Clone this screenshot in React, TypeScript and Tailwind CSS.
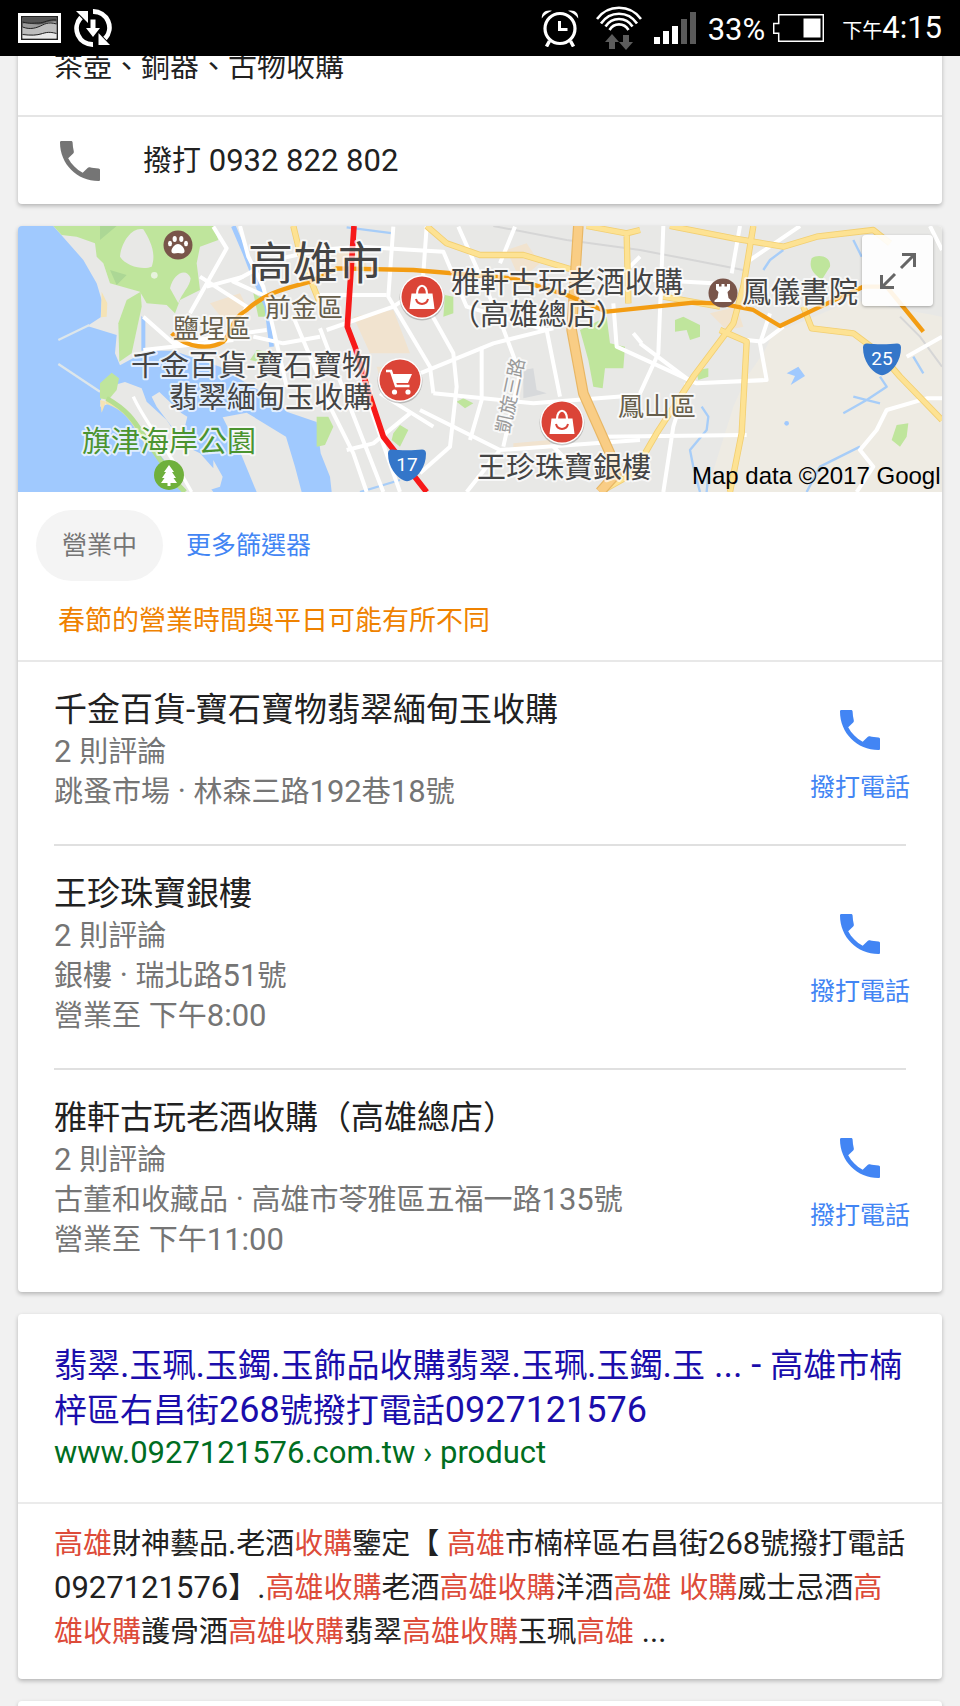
import React from "react";

const LATIN = /([\x20-\x7e·›]+)/;

/* Latin runs are set a little larger than the Chinese glyphs around them. */
function Mixed({ text, latin = "text-[31px]" }: { text: string; latin?: string }) {
  return (
    <>
      {text.split(LATIN).map((run, i) =>
        i % 2 === 1 ? (
          <span key={i} className={latin}>
            {run}
          </span>
        ) : (
          run
        ),
      )}
    </>
  );
}

function PhoneIcon({ className }: { className: string }) {
  return (
    <svg viewBox="0 0 40 40" className={`size-10 shrink-0 ${className}`} fill="currentColor" aria-hidden="true">
      <path d="M1.5 0H11c1 0 1.5.5 1.6 1.5.1 3.200.5 6 1.200 8.700.2.900 0 1.600-.6 2.200L8.200 17.300C11.500 23.500 16.500 28.500 22.700 31.800l4.900-4.900c.6-.6 1.300-.8 2.200-.6 2.700.7 5.500 1 8.700 1.100 1 .1 1.500.6 1.500 1.600v9.500c0 1-.5 1.500-1.500 1.500C17 40 0 23 0 1.500 0 .5.5 0 1.500 0z" />
    </svg>
  );
}

function StatusBar() {
  return (
    <header className="flex h-14 shrink-0 items-center bg-black px-[18px] text-white">
      <svg viewBox="0 0 43 30" className="h-[30px] w-[43px]" aria-hidden="true">
        <path d="M0 0h43v30H0z" fill="#fff" />
        <path d="M3 3h37v24H3z" fill="#222" />
        <path d="M4.500 4.500h34v21h-34z" fill="#9a9a9a" />
        <path d="M4.500 4.500h34v4c-8-1-12 3-18 3s-10-2-16-1z" fill="#555" />
        <path d="M4.500 14c8 3 14 1 20-2s10-2 14-1v9c-8-3-14 2-20 2s-9-2-14-1z" fill="#bdbdbd" />
        <path d="M4.500 21c8 1 14 2 20 0s10-2 14-1v5.500h-34z" fill="#e8e8e8" />
        <path d="M4.500 9c8 2 10 1 16 1s10-4 18-3M4.500 14c8 3 14 1 20-2s10-2 14-1M4.500 21.500c8 1 14 1 20-1s10-1 14 0" fill="none" stroke="#222" />
      </svg>
      <svg viewBox="0 0 38 38" className="ml-[13px] size-[38px]" aria-hidden="true">
        <g fill="none" stroke="#fff" strokeWidth="4.800">
          <path d="M19 35.500A16 16 0 0 1 7 8.500" />
          <path d="M19 2.500A16 16 0 0 1 31 29.500" />
        </g>
        <g fill="#fff">
          <path d="M2 2h12v12z" />
          <path d="M36 36H24.500V24z" />
          <path d="M16.500 10.500h5V19H26l-7 9-7-9h4.500z" />
        </g>
      </svg>

      <div className="ml-auto flex items-center">
        <svg viewBox="0 0 38 38" className="size-[38px]" fill="none" stroke="#fff" aria-hidden="true">
          <circle cx="19" cy="19.500" r="15" strokeWidth="3.200" />
          <path d="M18.500 12v8.500h8" strokeWidth="3" />
          <path d="m8.500 32-3 5.500M29.500 32l3 5.500" strokeWidth="3.500" />
          <path d="M.8 9.500C.5 4 4 .5 11 1.800 7 3.500 3 6 .8 9.500zM37.200 9.500C37.500 4 34 .5 27 1.800c4 1.700 8 4.200 10.200 7.700z" fill="#fff" stroke="none" />
        </svg>
        <svg viewBox="0 0 46 44" className="ml-[17px] h-11 w-[46px]" fill="none" aria-hidden="true">
          <g stroke="#fff" strokeWidth="2.600">
            <path d="M1 13C12-2 34-2 45 13" />
            <path d="M5 17.500C14 4.500 32 4.500 41 17.500" />
            <path d="M9.500 20.500C16 10.500 30 10.500 36.500 20.500" />
            <path d="M13.500 24C18 16.500 28 16.500 32.500 24" />
          </g>
          <path d="M16 28l7 8h-4v7h-6v-7H9zM30 44l-7-8h4v-7h6v7h4z" fill="#5c5c5c" />
        </svg>
        <svg viewBox="0 0 42 32" className="ml-3 h-8 w-[42px]" aria-hidden="true">
          <path d="M0 25h6v7H0zM9 19h6v13H9zM18 14h6v18h-6z" fill="#fff" />
          <path d="M27 7h6v25h-6zM36 0h6v32h-6z" fill="#5a5a5a" />
        </svg>
        <span className="ml-3 pt-[3px] text-[31px] leading-10">33%</span>
        <svg viewBox="0 0 51 28" className="ml-2 h-7 w-[51px]" aria-hidden="true">
          <path d="M5.700.7h44.600v26.600H5.700v-8H.7V9.500h5z" fill="none" stroke="#fff" strokeWidth="1.500" />
          <path d="M30.500 4.500h17v19h-17z" fill="#fff" />
        </svg>
        <time className="ml-[18px] flex items-baseline pt-[3px]">
          <span className="text-[20px] leading-10">下午</span>
          <span className="text-[31px] leading-10">4:15</span>
        </time>
      </div>
    </header>
  );
}

const MAJOR = "#fde293";

function Halo({ x, y, children, anchor }: { x: number; y: number; children: string; anchor?: "end" | "middle" }) {
  return (
    <text x={x} y={y} textAnchor={anchor} stroke="#ffffff" strokeOpacity=".7" strokeWidth="4" strokeLinejoin="round" paintOrder="stroke">
      {children}
    </text>
  );
}

function BagPin({ x, y }: { x: number; y: number }) {
  return (
    <g transform={`translate(${x} ${y})`}>
      <circle cy="1" r="22.500" fill="#000" opacity=".2" />
      <circle r="22" fill="#fff" />
      <circle r="20.500" fill="#db4437" />
      <path d="M-10.500-3.500h21L12.500 12h-25z" fill="#fff" />
      <path d="M-5-3c0-11 10-11 10 0" fill="none" stroke="#fff" strokeWidth="2.200" />
      <path d="M-6 2c1.500 6.500 10.500 6.500 12 0" fill="none" stroke="#db4437" strokeWidth="2" />
    </g>
  );
}

function RouteShield({ x, y, label }: { x: number; y: number; label: string }) {
  return (
    <g transform={`translate(${x} ${y})`}>
      <path d="M-15-15.500C-8-14.500 8-14.500 15-15.500c2.500 0 4 1.500 4 4C19 2 11 12 3 15.500c-2 1-4 1-6 0C-11 12-19 2-19-11.500c0-2.500 1.500-4 4-4z" fill="#3476c9" />
      <text y="6" textAnchor="middle" fill="#fff" className="text-[19px]">
        {label}
      </text>
    </g>
  );
}

function MapArt() {
  return (
    <svg viewBox="18 226 924 266" preserveAspectRatio="xMidYMid slice" className="block w-full" role="img" aria-label="高雄市地圖">
      <rect x="18" y="226" width="924" height="266" fill="#e8e8e6" />
      <g transform="translate(0 220) scale(.33333)" fill="none" strokeLinejoin="round">
        {/* land tones */}
        <path d="M2320 340 2420 300 2560 240 2826 290V816H2120L2200 560 2240 470 2290 400z" fill="#eeebe3" />
        <path d="M1060 290 1180 270 1230 400 1110 400zM1010 100 1090 90 1100 140 1010 150zM1130 440h60l20 60-60 10zM1520 90l60-20 40 60-60 50zM1540 670l110-10v26h-110zM630 250l90-30 30 60-80 20zM2130 280l80-20 20 60-50 10z" fill="#f1e3cf" />
        {/* water */}
        <path d="M54 18H160L215 80 250 120 290 190 305 240 302 292 262 318 350 345 345 400 360 436 440 392 520 392 660 440 740 490 830 540 860 575 950 606 962 700 990 770 995 816H54z" fill="#a0c9fe" />
        <path d="M424 288 436 300V392H424z" fill="#a0c9fe" />
        {/* harbour land */}
        <path d="M668 592 740 578 858 650 885 740 905 816H770L722 700z" fill="#e8e8e6" />
        <path d="M325 500 375 486 425 505 440 545 500 600 560 690 585 740 640 816H545L500 730 400 600 345 545 300 560 306 520z" fill="#e8e8e6" />
        <path d="M455 530 478 516 545 580 562 590 550 640 580 690 600 700 640 745 640 720 668 770 660 800 610 816 600 780 530 640 470 560z" fill="#e8e8e6" />
        <path d="M175 360 268 315M175 432 300 515" stroke="#dde6ea" strokeWidth="7" />
        <path d="M305 215 322 250 320 290 303 292zM300 540 318 545 305 578z" fill="#f5e3b5" />
        <path d="M318 545C390 570 400 610 440 670" stroke="#f1e5a8" strokeWidth="12" />
        {/* parks */}
        <path d="M160 18H640L655 60 600 80 590 130 600 210 540 240 525 280 500 255 440 250 420 215 330 190 310 130 290 110 285 70 230 50 185 45z" fill="#bfe59c" />
        <path d="M360 110C365 60 400 20 430 28 450 60 470 100 455 140 430 150 380 140 360 110zM510 205C520 160 560 140 572 175 570 200 545 220 535 250z" fill="#e8e8e6" />
        <circle cx="463" cy="166" r="10" fill="#e8f3dd" />
        <path d="M330 150 380 165 350 195zM300 18 350 18 300 60z" fill="#acd795" />
        <path d="M422 215 425 260 395 400 358 425 355 310 380 240z" fill="#bfe59c" />
        <path d="M300 490 335 458 357 475 350 510 325 540 300 535z" fill="#bfe59c" />
        <path d="M320 535C400 580 410 620 460 690L530 790 555 816" stroke="#b5df90" strokeWidth="15" />
        <path d="M400 530C430 600 500 680 575 816" stroke="#fff" strokeWidth="10" />
        <path d="M770 390 800 395 795 430 750 420zM950 590 985 590 1000 620 975 675 950 680zM1180 640 1200 615 1225 630 1200 680 1175 660zM1370 545 1390 535 1420 550 1395 565zM1335 225 1360 230 1360 280 1330 290zM760 220 795 240 800 290 775 290z" fill="#bfe59c" />
        <path d="M1740 330 1820 290 1830 370 1875 380 1870 445 1815 445 1808 505 1780 500 1765 420z" fill="#bfe59c" />
        <path d="M2435 115C2455 100 2495 110 2490 140L2465 180C2440 160 2425 145 2435 115zM2025 300 2050 290 2100 315 2100 350 2070 360 2060 330 2025 335zM2088 450 2125 445 2125 470 2095 480zM2675 660 2690 615 2725 610 2720 650 2700 680z" fill="#bfe59c" />
        <path d="M1570 450 1600 445 1610 510 1640 520 1570 535z" fill="#d7d9db" />
        {/* railway and streams */}
        <path d="M1480 18 1700 60 1920 90 2050 115 2230 150M2700 290 2760 350 2826 440" stroke="#d6d6d6" strokeWidth="6" />
        <path d="M700 18 735 100 770 190 800 260 815 380" stroke="#a0c9fe" strokeWidth="14" />
        <path d="M1040 22 1180 40M2100 816 2080 740 2070 690 2120 630 2125 590 2105 560M2120 816 2125 760M2290 150 2310 120 2350 90M2530 580 2600 540 2660 500 2640 470M2560 530 2640 550M2420 816 2460 740 2580 680M2740 410 2770 460M2560 60 2585 110M1080 816 1200 780" stroke="#a7cdf8" strokeWidth="7" />
        <path d="M2360 460 2395 440 2415 468 2372 495 2385 468z" fill="#a0c9fe" />
        <circle cx="2360" cy="610" r="7" fill="#a0c9fe" />
        {/* minor roads */}
        <g stroke="#fff" strokeWidth="12">
          <path d="M640 20 680 85 570 280M720 18 745 110 790 200 830 370 860 500" />
          <path d="M600 170 740 260 690 360M730 170 620 200M430 290 520 370 800 330M430 390 700 360" />
          <path d="M760 350 850 370 960 350M880 290 960 480M800 230 700 185 820 120 960 90" />
          <path d="M955 90 1080 80 1330 95 1400 260 1640 330 1680 530" />
          <path d="M1180 20 1165 230 1290 440 1300 520M1280 20 1265 230 1360 400 1370 500 1350 680 1260 760" />
          <path d="M1375 20 1500 300 1560 460 1510 680" />
          <path d="M1545 20 1500 130M960 225 1160 225M980 330 1180 260 1300 180M960 325 1050 560 1150 816" />
          <path d="M1260 460 1480 370 1660 325M1300 520 1450 535 1600 550 1920 525M1260 570 1500 690 1920 660M1230 580 1120 670 1040 690" />
          <path d="M1445 380 1445 540 1410 660M975 530 1060 700 1100 816M1110 560 1200 816M1140 520 1300 620M1660 680 1700 720M1500 690 1400 816" />
          <path d="M1840 250 1850 380 2090 490 2300 480 2280 370 2310 280M1920 110 1850 180M1990 18 1975 400 1920 520" />
          <path d="M2060 490 2020 620 1990 816M1800 650 2240 645M1920 370 2080 490M1900 340 1925 370M2220 18 2195 160M2250 120 2400 18" />
          <path d="M2240 360 2290 365 2350 320M2826 350 2720 410M2826 535 2780 535 2660 570 2630 630 2580 690 2620 740 2570 816M1960 180 2140 190M2790 18 2826 90" />
        </g>
        {/* arterial roads */}
        <g stroke="#f2cf72" strokeWidth="19">
          <path d="M880 18 900 100 960 250M1280 18 1340 70 1440 105 1570 105 1720 150M1760 18 1880 40 1920 30M1880 40 1885 250M2010 18 2200 55 2350 80 2450 50 2620 30 2670 70" />
          <path d="M2260 18 2230 200 2200 310 2080 470 1970 640 1900 760 1800 816M2160 330 2240 365 2225 640 2190 816M2410 260 2435 325 2560 340 2640 400 2700 470 2826 600M1990 230 2160 260" />
        </g>
        <g stroke={MAJOR} strokeWidth="14">
          <path d="M880 18 900 100 960 250M1280 18 1340 70 1440 105 1570 105 1720 150M1760 18 1880 40 1920 30M1880 40 1885 250M2010 18 2200 55 2350 80 2450 50 2620 30 2670 70" />
          <path d="M2260 18 2230 200 2200 310 2080 470 1970 640 1900 760 1800 816M2160 330 2240 365 2225 640 2190 816M2410 260 2435 325 2560 340 2640 400 2700 470 2826 600M1990 230 2160 260" />
        </g>
        {/* expressway */}
        <path d="M1735 18 1715 330 1750 520 1830 700 1850 760 1800 816" stroke="#e8b765" strokeWidth="32" />
        <path d="M1735 18 1715 330 1750 520 1830 700 1850 760 1800 816" stroke="#f9cd85" strokeWidth="25" />
        {/* metro lines */}
        <path d="M515 340C560 385 630 390 670 365 700 330 690 300 740 270 800 215 860 205 930 185L1010 145 1240 150 1540 175 1700 225 1820 275 2080 248 2160 250 2260 270 2340 318 2450 265 2590 200 2660 200 2770 335" stroke="#f39c12" strokeWidth="13" />
        <path d="M1062 18 1042 320 1065 380 1110 530 1150 650 1280 816" stroke="#f71919" strokeWidth="17" />
      </g>

      <g className="text-[29px]" fill="#444444">
        <g className="text-[45px]">
          <Halo x={248} y={280}>高雄市</Halo>
        </g>
        <g className="text-[26px]" fill="#665e4b">
          <Halo x={265} y={317}>前金區</Halo>
          <Halo x={173} y={338}>鹽埕區</Halo>
          <Halo x={618} y={416}>鳳山區</Halo>
        </g>
        <Halo x={451} y={293}>雅軒古玩老酒收購</Halo>
        <Halo x={451} y={325}>（高雄總店）</Halo>
        <Halo x={371} y={376} anchor="end">千金百貨-寶石寶物</Halo>
        <Halo x={372} y={408} anchor="end">翡翠緬甸玉收購</Halo>
        <Halo x={477} y={478}>王珍珠寶銀樓</Halo>
        <Halo x={742} y={303}>鳳儀書院</Halo>
        <g fill="#4b9430">
          <Halo x={82} y={452}>旗津海岸公園</Halo>
        </g>
        <g className="text-[19px]" fill="#9a9a9a" transform="translate(509 434) rotate(-78)">
          <Halo x={0} y={0}>凱旋三路</Halo>
        </g>
      </g>

      <BagPin x={422} y={297} />
      <BagPin x={562} y={422} />
      <g transform="translate(400 380)">
        <circle cy="1" r="22.500" fill="#000" opacity=".2" />
        <circle r="22" fill="#fff" />
        <circle r="20.500" fill="#db4437" />
        <path d="M-8-6h20L8 3H-5z" fill="#fff" />
        <path d="M-14-9h5L-4 6H9.500" fill="none" stroke="#fff" strokeWidth="2.500" />
        <circle cx="-5.500" cy="12" r="2.600" fill="#fff" />
        <circle cx="8" cy="12" r="2.600" fill="#fff" />
      </g>
      <g transform="translate(178 245)">
        <circle r="14.500" fill="#79554a" />
        <g fill="#fff">
          <path d="M0-1c3.500 0 7 5 6.500 7.500C6 9.500 2.500 8 0 8s-6 1.500-6.500-1.500C-7 4-3.500-1 0-1z" />
          <ellipse cx="-8" cy="-1.500" rx="2" ry="2.700" />
          <ellipse cx="-3.300" cy="-6" rx="2.100" ry="3" />
          <ellipse cx="3.300" cy="-6" rx="2.100" ry="3" />
          <ellipse cx="8" cy="-1.500" rx="2" ry="2.700" />
        </g>
      </g>
      <g transform="translate(723 293)">
        <circle r="14.500" fill="#79554a" />
        <path d="M-7-9h3v2.500h2.500V-9h3v2.500H4V-9h3v5.500L4.500-1 5.500 5 8.500 7.500V9h-17V7.500l3-2.500 1-6L-7-3.500z" fill="#fff" />
      </g>
      <g transform="translate(169 475)">
        <circle r="15" fill="#6fb03c" />
        <path d="M0-10 5-3H3L7 3H4.500L8 8H1.500v3h-3V8H-8l3.500-5H-7l4-6h-2z" fill="#fff" />
      </g>
      <RouteShield x={407} y={465} label="17" />
      <RouteShield x={882} y={359} label="25" />
    </svg>
  );
}

type Place = { name: string; reviews: string; address: string; hours?: string };

const places: Place[] = [
  { name: "千金百貨-寶石寶物翡翠緬甸玉收購", reviews: "2 則評論", address: "跳蚤市場 · 林森三路192巷18號" },
  { name: "王珍珠寶銀樓", reviews: "2 則評論", address: "銀樓 · 瑞北路51號", hours: "營業至 下午8:00" },
  { name: "雅軒古玩老酒收購（高雄總店）", reviews: "2 則評論", address: "古董和收藏品 · 高雄市苓雅區五福一路135號", hours: "營業至 下午11:00" },
];

/* Odd entries are the highlighted search terms. */
const snippet = [
  "", "高雄", "財神藝品.老酒", "收購", "鑒定【 ", "高雄", "市楠梓區右昌街268號撥打電話0927121576】.", "高雄收購", "老酒", "高雄收購", "洋酒", "高雄 收購", "威士忌酒", "高雄收購", "護骨酒", "高雄收購", "翡翠", "高雄收購", "玉珮", "高雄", " ...",
];

const CARD = "rounded-[4px] bg-white shadow-[0_2px_4px_rgba(0,0,0,0.25)]";

export default function App() {
  return (
    <div lang="zh-TW" className="flex h-screen flex-col bg-[#f1f1f1] font-[Roboto,'Noto_Sans_CJK_TC',sans-serif] text-[29px] text-[#212121]">
      <StatusBar />
      <main className="flex-1 overflow-y-auto px-[18px] pb-6 [scrollbar-width:none]">
        <div className="-mt-[11px] flex flex-col gap-[22px]">
          <section className={CARD}>
            <p className="px-9 pb-[26px] leading-[44px]">茶壺、銅器、古物收購</p>
            <a href="tel:0932822802" className="flex h-[89px] items-center gap-[43px] border-t-2 border-[#e5e5e5] pr-9 pl-[42px]">
              <PhoneIcon className="text-[#757575]" />
              <span className="leading-[44px]">
                <Mixed text="撥打 0932 822 802" />
              </span>
            </a>
          </section>

          <section className={`overflow-hidden ${CARD}`}>
            <div className="relative overflow-hidden">
              <MapArt />
              <button type="button" aria-label="展開地圖" className="absolute top-[9px] right-[9px] flex size-[71px] items-center justify-center rounded-[4px] bg-white/90 shadow-[0_1px_3px_rgba(0,0,0,0.3)]">
                <svg viewBox="0 0 36 36" className="size-9" fill="none" stroke="#666" strokeWidth="3" aria-hidden="true">
                  <path d="M22 1.500h12.500V14M34 2 21 15M1.500 22v12.500H14M2 34l13-13" />
                </svg>
              </button>
              <p className="absolute right-0 bottom-0 w-[250px] overflow-hidden font-['Liberation_Sans',sans-serif] text-[24px] leading-8 whitespace-nowrap text-black">
                Map data ©2017 Googl
              </p>
            </div>

            <div className="flex items-center gap-[23px] px-[18px] pt-[18px] text-[25px] leading-9">
              <button type="button" className="h-[71px] rounded-full bg-[#f4f4f4] px-[26px] text-[#757575]">
                營業中
              </button>
              <a href="#filters" className="text-[#4285f4]">
                更多篩選器
              </a>
            </div>
            <p className="px-10 pt-5 pb-[19px] text-[27px] leading-10 text-[#ef8200]">春節的營業時間與平日可能有所不同</p>

            <ul className="border-t-2 border-[#e8e8e8] px-9">
              {places.map((place) => (
                <li key={place.name} className="flex items-center justify-between border-b-2 border-[#e0e0e0] pt-[26px] pb-8 last:border-b-0">
                  <div className="leading-10 text-[#757575]">
                    <h2 className="text-[33px] leading-[44px] text-[#212121]">{place.name}</h2>
                    <p className="h-10"><Mixed text={place.reviews} /></p>
                    <p className="h-10"><Mixed text={place.address} /></p>
                    {place.hours && <p className="h-10"><Mixed text={place.hours} /></p>}
                  </div>
                  <button type="button" className="-mr-1 flex shrink-0 flex-col items-center gap-5 pt-4 text-[25px] leading-9 text-[#4285f4]">
                    <PhoneIcon className="" />
                    撥打電話
                  </button>
                </li>
              ))}
            </ul>
          </section>

          <section className={CARD}>
            <a href="#product" className="block px-9 pt-[29px] pb-[29px]">
              <h2 className="text-[33px] leading-[45px] text-[#1a0dab]">
                <Mixed text="翡翠.玉珮.玉鐲.玉飾品收購翡翠.玉珮.玉鐲.玉 ... - 高雄市楠梓區右昌街268號撥打電話0927121576" latin="text-[36px]" />
              </h2>
              <p className="text-[31px] leading-10 text-[#006d21]">www.0927121576.com.tw › product</p>
            </a>
            <p className="border-t-2 border-[#ebebeb] px-9 pt-[18px] pb-[25px] leading-[44px]">
              {snippet.map((part, i) => (
                <span key={i} className={i % 2 === 1 ? "text-[#dd4b39]" : ""}>
                  <Mixed text={part} />
                </span>
              ))}
            </p>
          </section>

          <section className={`h-24 ${CARD}`} />
        </div>
      </main>
    </div>
  );
}
